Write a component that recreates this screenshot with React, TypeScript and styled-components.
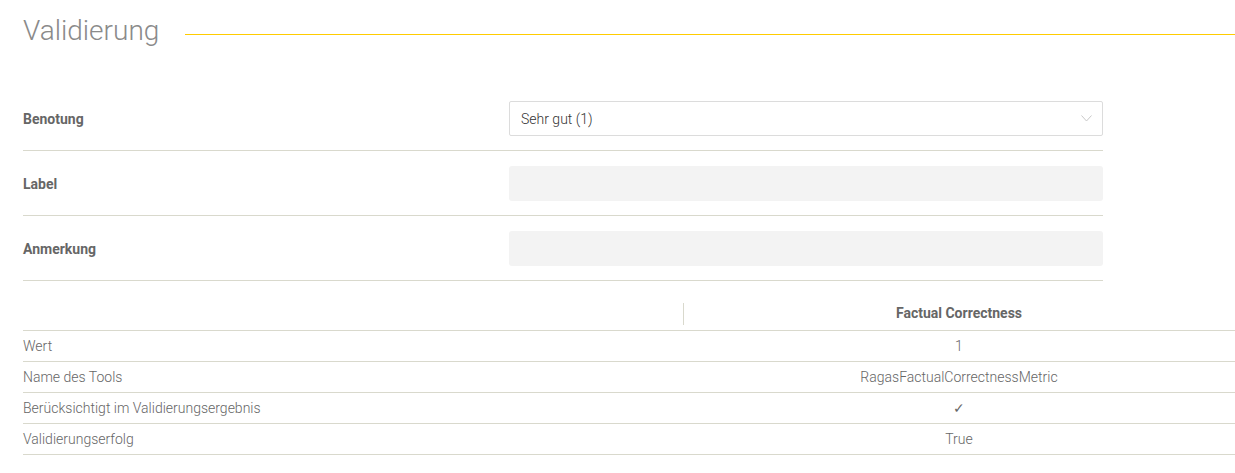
import React from "react";
import styled, { createGlobalStyle } from "styled-components";

const rows = [
  { label: "Wert", value: "1" },
  { label: "Name des Tools", value: "RagasFactualCorrectnessMetric" },
  { label: "Berücksichtigt im Validierungsergebnis", value: "✓" },
  { label: "Validierungserfolg", value: "True" },
];

const App = () => {
  return (
    <>
      <GlobalStyle />
      <Page>
        <Header>
          <Title>Validierung</Title>
          <Rule />
        </Header>

        <Form>
          <FieldRow>
            <FieldLabel>Benotung</FieldLabel>
            <SelectBox>
              <span>Sehr gut (1)</span>
              <svg width="11" height="7" viewBox="0 0 11 7" fill="none">
                <path d="M0.5 0.5 L5.5 6 L10.5 0.5" stroke="#c8c8c8" strokeWidth="1" />
              </svg>
            </SelectBox>
          </FieldRow>
          <FieldRow>
            <FieldLabel>Label</FieldLabel>
            <TextInput />
          </FieldRow>
          <FieldRow>
            <FieldLabel>Anmerkung</FieldLabel>
            <TextInput />
          </FieldRow>
        </Form>

        <Table>
          <thead>
            <tr>
              <HeadCell />
              <HeadCell $divided>Factual Correctness</HeadCell>
            </tr>
          </thead>
          <tbody>
            {rows.map((row) => (
              <tr key={row.label}>
                <Cell>{row.label}</Cell>
                <Cell $center>{row.value}</Cell>
              </tr>
            ))}
          </tbody>
        </Table>
      </Page>
    </>
  );
};

export default App;

const GlobalStyle = createGlobalStyle`
  body {
    margin: 0;
    background: #fff;
    font-family: Roboto, "Liberation Sans", sans-serif;
  }
`;

const Page = styled.div`
  padding: 0 0 0 23px;
`;

const Header = styled.div`
  display: flex;
  align-items: center;
  gap: 26px;
  height: 62px;
  padding-bottom: 24px;
`;

const Title = styled.h1`
  margin: 0;
  font-size: 28px;
  font-weight: 300;
  color: #8a8a8a;
  line-height: 1;
`;

const Rule = styled.div`
  flex: 1;
  height: 1px;
  background: #ffcc00;
  margin-top: 6px;
`;

const Form = styled.div`
  width: 1080px;
`;

const FieldRow = styled.div`
  display: grid;
  grid-template-columns: 45% 55%;
  align-items: center;
  padding: 15px 0 14px;
  border-bottom: 1px solid #d9d9cd;
`;

const FieldLabel = styled.label`
  font-size: 14px;
  font-weight: 700;
  color: #666;
`;

const SelectBox = styled.div`
  display: flex;
  align-items: center;
  justify-content: space-between;
  height: 35px;
  box-sizing: border-box;
  padding: 0 10px 0 11px;
  border: 1px solid #dcdcdc;
  border-radius: 2px;
  font-size: 14px;
  font-weight: 300;
  color: #333;
`;

const TextInput = styled.div`
  height: 35px;
  background: #f3f3f3;
  border-radius: 3px;
`;

const Table = styled.table`
  width: 1212px;
  margin-top: 15px;
  border-collapse: collapse;
  table-layout: fixed;

  th:first-child,
  td:first-child {
    width: 660px;
  }
`;

const HeadCell = styled.th<{ $divided?: boolean }>`
  height: 34px;
  padding: 0;
  font-size: 14px;
  font-weight: 700;
  color: #666;
  text-align: center;
  border-bottom: 1px solid #d9d9cd;
  background: ${(p) =>
    p.$divided
      ? "linear-gradient(#d9d9cd, #d9d9cd) left 7px / 1px 22px no-repeat"
      : "none"};
`;

const Cell = styled.td<{ $center?: boolean }>`
  height: 30px;
  padding: 0;
  font-size: 14px;
  font-weight: 300;
  color: #666;
  text-align: ${(p) => (p.$center ? "center" : "left")};
  border-bottom: 1px solid #d9d9cd;
`;
